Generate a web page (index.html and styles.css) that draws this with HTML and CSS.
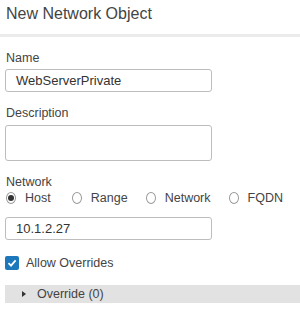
FILE: index.html
```html
<!DOCTYPE html>
<html lang="en">
<head>
    <meta charset="UTF-8">
    <title>New Network Object</title>
    <link rel="stylesheet" href="styles.css">
</head>
<body>
    <div class="dialog">
        <div class="dialog-header">
            <h1>New Network Object</h1>
        </div>

        <form class="dialog-body">
            <label class="field-label">Name</label>
            <div class="text-input">WebServerPrivate</div>

            <label class="field-label">Description</label>
            <div class="text-area"></div>

            <label class="field-label net-label">Network</label>
            <div class="radio-row">
                <span class="radio checked"><span class="dot"></span></span><span class="radio-text host">Host</span>
                <span class="radio"></span><span class="radio-text">Range</span>
                <span class="radio"></span><span class="radio-text">Network</span>
                <span class="radio"></span><span class="radio-text">FQDN</span>
            </div>
            <div class="text-input ip-input">10.1.2.27</div>

            <div class="check-row">
                <span class="checkbox">
                    <svg width="10" height="10" viewBox="0 0 10 10"><path d="M1.5 5.2 L4 7.6 L8.6 2.4" fill="none" stroke="#fff" stroke-width="1.8"/></svg>
                </span>
                <span class="check-text">Allow Overrides</span>
            </div>

            <div class="override-bar">
                <span class="caret"></span>
                <span>Override (0)</span>
            </div>
        </form>
    </div>
</body>
</html>
```

FILE: styles.css
```css
* {
    margin: 0;
    padding: 0;
    box-sizing: border-box;
}

body {
    background-color: #fff;
    color: #333;
    font-family: 'Liberation Sans', Arial, sans-serif;
}

.dialog {
    width: 300px;
}

.dialog-header {
    height: 37px;
    padding: 4px 6px 0;
    border-bottom: 3px solid #ebebeb;
}

.dialog-header h1 {
    font-size: 16px;
    font-weight: normal;
    line-height: 20px;
    color: #444;
}

.dialog-body {
    padding-left: 5px;
}

.field-label {
    display: block;
    font-size: 12.5px;
    line-height: 16px;
    margin-top: 13px;
    padding-left: 1px;
    color: #444;
}

.text-input {
    width: 207px;
    height: 23px;
    margin-top: 3px;
    border: 1px solid #bdbdbd;
    border-radius: 3px;
    padding-left: 10px;
    font-size: 13px;
    line-height: 21px;
    color: #333;
}

.text-area {
    width: 207px;
    height: 36px;
    margin-top: 4px;
    border: 1px solid #bdbdbd;
    border-radius: 3px;
}

.net-label {
    margin-top: 13px;
}

.radio-row {
    display: flex;
    align-items: center;
    height: 16px;
    font-size: 12.5px;
    color: #444;
}

.radio {
    width: 12px;
    height: 12px;
    border: 1px solid #9a9a9a;
    border-radius: 50%;
    display: flex;
    align-items: center;
    justify-content: center;
    margin-left: 1px;
}

.radio .dot {
    width: 6px;
    height: 6px;
    border-radius: 50%;
    background-color: #333;
}

.radio-text {
    margin-left: 9px;
    margin-right: 17px;
}

.radio-text.host {
    margin-right: 20px;
}

.ip-input {
    margin-top: 11px;
}

.check-row {
    display: flex;
    align-items: center;
    margin-top: 15px;
    height: 15px;
    font-size: 12.5px;
    color: #444;
}

.checkbox {
    width: 14px;
    height: 14px;
    border-radius: 2px;
    background-color: #1c78bb;
    display: flex;
    align-items: center;
    justify-content: center;
}

.check-text {
    margin-left: 7px;
}

.override-bar {
    display: flex;
    align-items: center;
    height: 18px;
    margin-top: 15px;
    background-color: #e2e2e2;
    font-size: 12.5px;
    color: #444;
}

.caret {
    width: 0;
    height: 0;
    border-top: 3px solid transparent;
    border-bottom: 3px solid transparent;
    border-left: 4px solid #333;
    margin-left: 17px;
    margin-right: 11px;
}
```
